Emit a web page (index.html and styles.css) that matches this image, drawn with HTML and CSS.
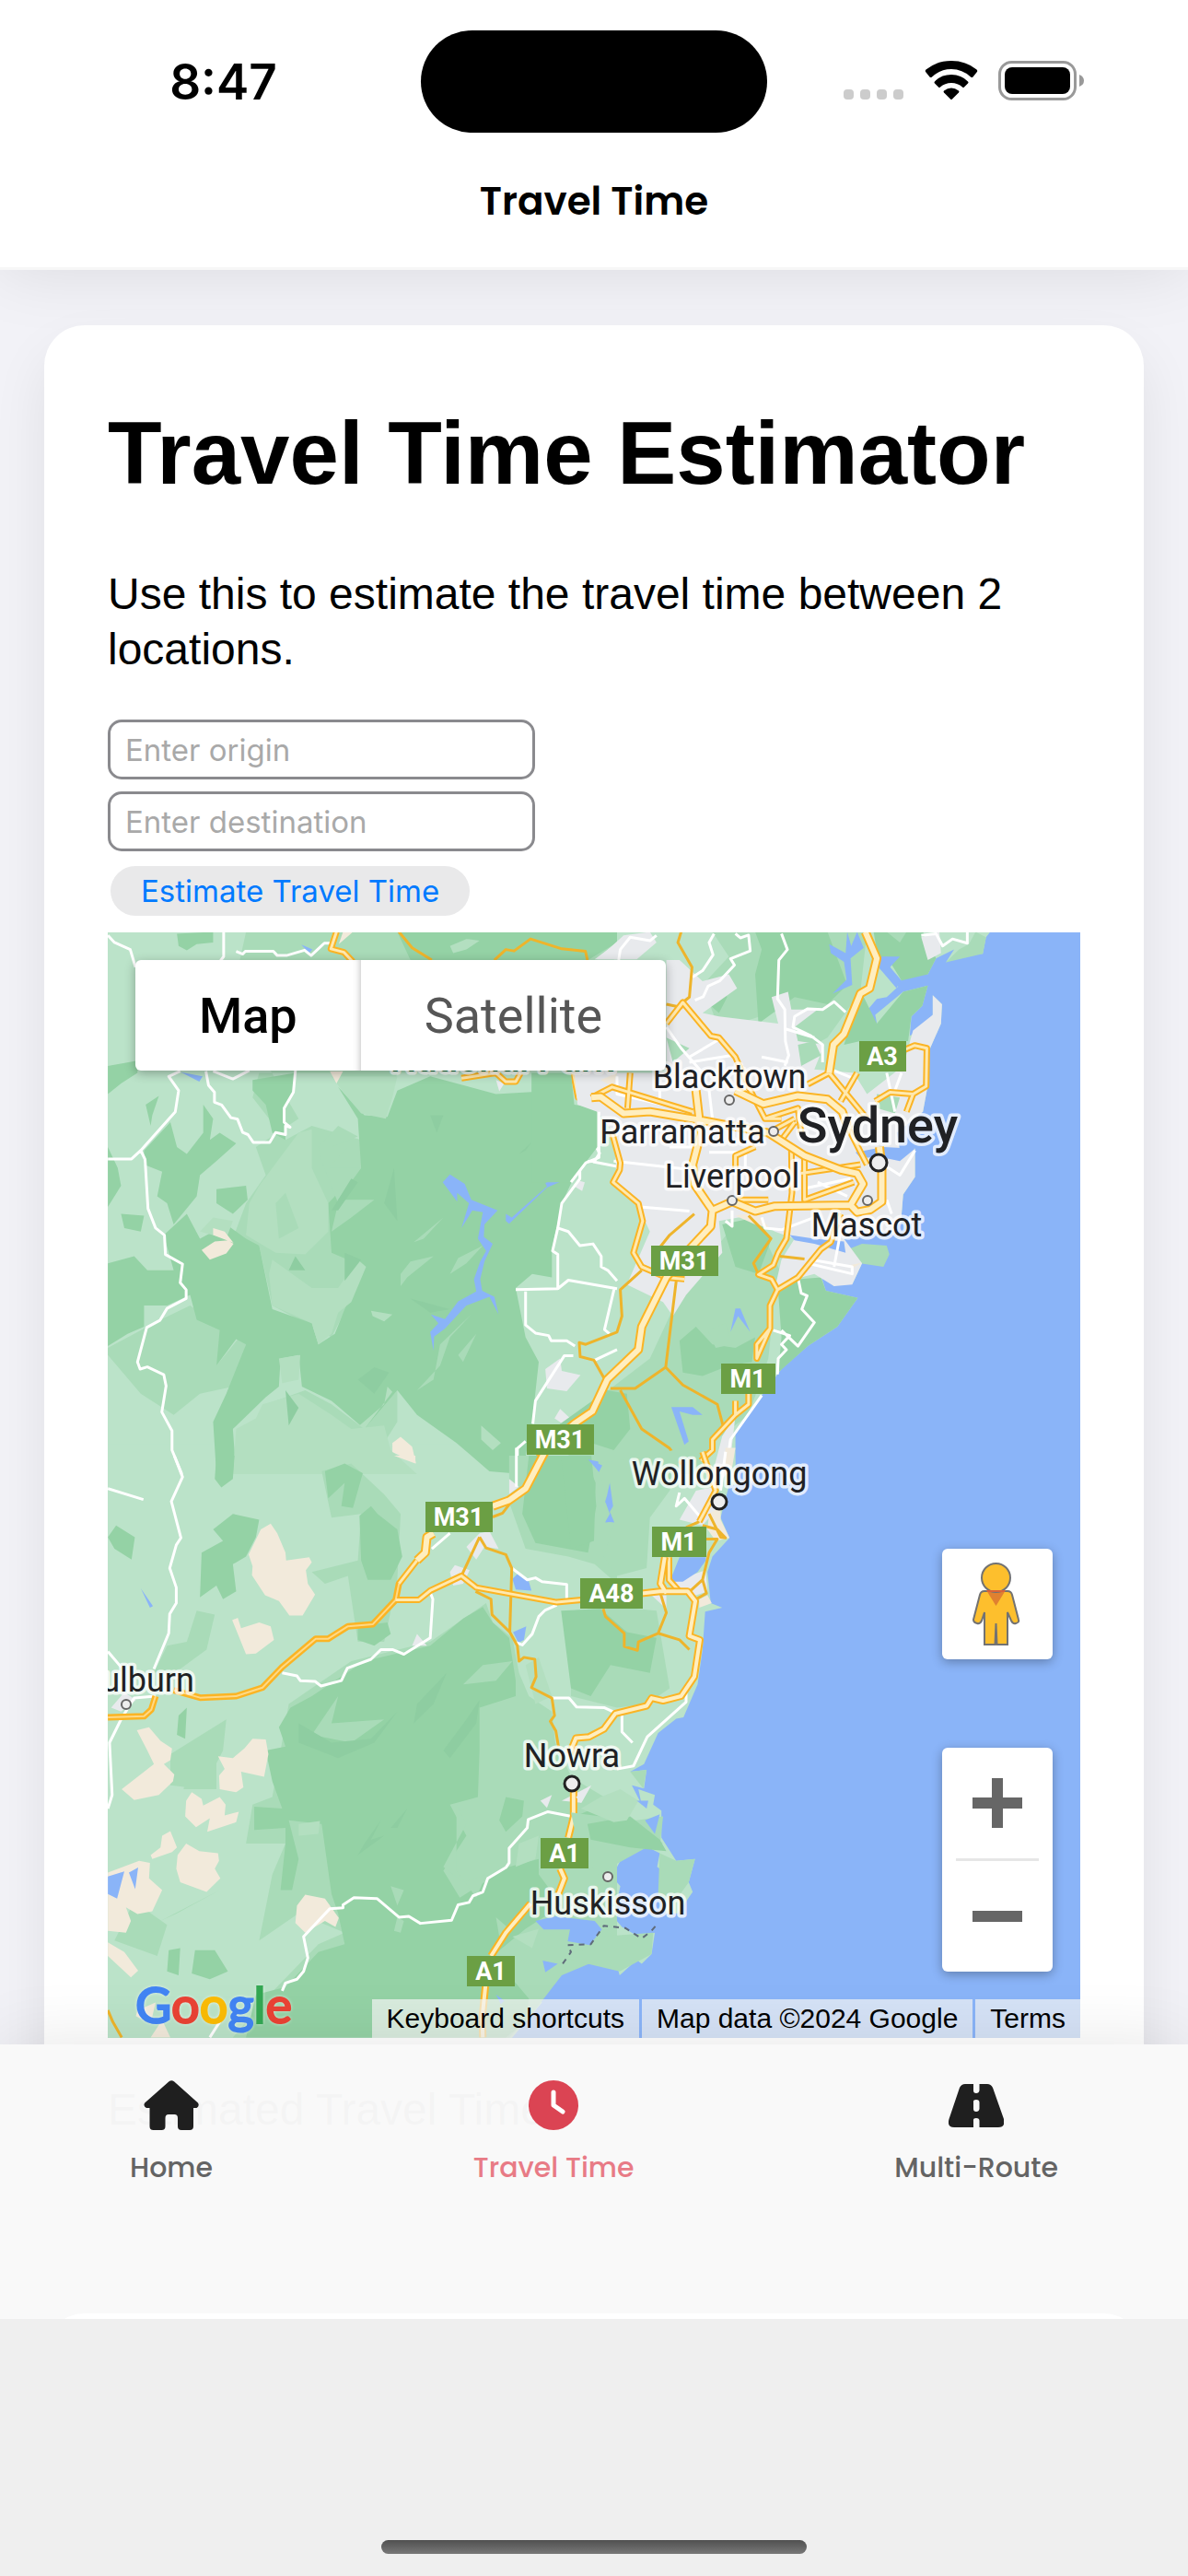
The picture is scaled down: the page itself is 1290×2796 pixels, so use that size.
FILE: index.html
```html
<!DOCTYPE html>
<html lang="en">
<head>
  <meta charset="UTF-8">
  <meta name="viewport" content="width=device-width, initial-scale=1.0">
  <title>Travel Time</title>
  <link rel="stylesheet" href="styles.css">
</head>
<body>
  <header class="header">
    <div class="status">
      <span class="clock">8:47</span>
      <span class="island"></span>
      <span class="status-icons">
        <svg width="66" height="12" viewBox="0 0 66 12" class="signal" aria-hidden="true">
          <rect width="11" height="11" rx="4"/><rect x="18" width="11" height="11" rx="4"/><rect x="36" width="11" height="11" rx="4"/><rect x="54" width="11" height="11" rx="4"/>
        </svg>
        <svg width="58" height="43" viewBox="0 0 58 43" aria-hidden="true">
          <path d="M1.500 12.500Q0 11 1.500 9.500Q13 0 29 0T56.500 9.500Q58 11 56.500 12.500L52.500 17.500Q51.500 18.500 50 17.500Q41 9 29 9T8 17.500Q6.500 18.500 5.500 17.500Z"/>
          <path d="M11 22.500Q18 15 29 15T47 22.500Q48 23.500 47 24.500L43 28.500Q42 29.500 41 28.500Q36 24 29 24T17 28.500Q16 29.500 15 28.500L11 24.500Q10 23.500 11 22.500Z"/>
          <path d="M21 32.500Q29 26.500 37 32.500Q38 33.500 37 34.500L30 41.500Q29 42.500 28 41.500L21 34.500Q20 33.500 21 32.500Z"/>
        </svg>
        <svg width="94" height="43" viewBox="0 0 94 43" aria-hidden="true">
          <rect x="1.500" y="1.500" width="82" height="40" rx="13" fill="none" stroke="#999" stroke-width="3"/>
          <rect x="7" y="7" width="71" height="29" rx="8"/>
          <path d="M88 15Q93 17 93 21.500T88 28Z" fill="#999"/>
        </svg>
      </span>
    </div>
    <div class="title">Travel Time</div>
  </header>

  <main class="main">
    <section class="card">
      <h1>Travel Time Estimator</h1>
      <p class="intro">Use this to estimate the travel time between 2 locations.</p>

      <form class="form">
        <input type="text" id="origin" aria-label="Origin" placeholder="Enter origin">
        <input type="text" id="destination" aria-label="Destination" placeholder="Enter destination">
        <button type="button">Estimate Travel Time</button>
      </form>

      <!-- Map -->
      <div class="map">
        <svg class="map-canvas" viewBox="0 0 1056 1200" preserveAspectRatio="xMidYMid slice" role="img" aria-label="Map of Sydney and surrounds">
          <!-- north land -->
          <g transform="translate(503 -12) scale(.35714 .38265)">
            <path class="land" d="M-1440 0H1300L1262 45 1252 92 1200 92 1140 116 1165 80 1110 105 1085 150 1050 140 1005 168 970 130 975 100 935 100 935 130 995 185 960 215 930 220 885 270 930 290 925 265 1010 200 1085 182 1068 240 1035 270 1030 325 1075 300 1100 265 1100 210 1128 235 1125 290 1085 375 1085 465 1070 540 990 600 1000 650 1046 645 1046 725 1010 775 1003 855 960 880 830 900 820 930 885 970 855 1030 850 1005 800 1035 760 1005 775 1048 872 1068 810 1150 720 1205 640 1270 560 1370 500 1450 500 1600H-1440Z"/>
          </g>
          <!-- south land -->
          <g transform="translate(503 568) scale(.35714 .42092)">
            <path class="land" d="M-1440-30H495L500 20 470 110 455 160 482 212 430 260 415 300 425 380 460 392 408 402 400 500 385 590 342 675 320 678 265 715 222 795 180 815 230 810 222 858 185 850 215 900 205 860 255 875 250 900 275 915 275 985 320 1045 377 1040 358 1100 370 1125 325 1180 290 1180 270 1110 285 1075 262 1060 270 1025 235 1010 195 1018 150 1045 125 1085 150 1110 130 1190 155 1215 205 1240 255 1230 245 1285 215 1310 200 1300 148 1340 132 1290 90 1285 40 1292-20 1320-75 1358-103 1395-88 1410-138 1460-188 1510H-1440Z"/>
          </g>

          <!-- north west -->
          <g transform="translate(-7 -12) scale(.35714 .38265)">
            <path class="mid" d="M440 30H1568V100L1480 180 1300 430 900 430 860 560 780 540 700 430 480 430 460 500 560 620 640 580 790 620 870 840 820 960 700 1180 640 1150 520 1090 480 920 400 900 440 800 500 720 470 640 600 560 500 400 400 200ZM20 1210L180 1130 270 1090 370 1160 350 1260 420 1180 440 1200 400 1320 300 1340 220 1400 120 1340 20 1230ZM530 1360L620 1330 700 1370 800 1440 900 1330 900 1420 800 1568H700L640 1440Z"/>
            <path class="dark" d="M230 35L340 30V60L290 65 260 82 235 70ZM940 110L900 30H1568V60L1480 110ZM20 410L110 395V430L60 460 20 490ZM780 560L720 470 800 550 870 555 900 480 1000 440 1200 490 1380 480 1490 560 1500 640 1450 700 1400 800 1370 930 1370 1010 1310 1000 1260 1040 1290 1180 1330 1250 1310 1420 1280 1568 1180 1560 1080 1480 960 1400 900 1330 800 1440 700 1360 610 1320 600 1230 545 1240 540 1320 500 1350 400 1440 410 1568 350 1568 340 1420 380 1340 440 1200 410 1185 350 1260 360 1160 290 1130 270 1060 200 1090 130 1090 130 1150 80 1170 20 1205V970L100 950 140 990 220 990 190 890 260 830 300 900 380 860 440 900 480 920 520 1100 640 1140 660 1200 710 1170 740 1100 800 980 700 940 690 800 790 700ZM310 520L340 560 330 620 360 600 410 630 350 680 300 720 290 780 220 860 200 800 170 780 185 710 130 690 130 650 210 570 230 640 260 660 310 600ZM460 450L590 430 580 490 555 530 560 620 520 600 500 520 460 480ZM350 760L440 750 445 790 400 830 350 800ZM135 520L175 495 155 550 150 580ZM60 830L130 835 120 880 70 870ZM20 640L50 700 60 750 20 810Z"/>
            <path class="light" d="M700 440H900L885 500 865 560 790 545 740 490ZM480 750L520 700 600 600 640 590 640 700 690 800 690 880 620 945 530 940 440 890 450 800ZM520 960L640 1040 720 1040 780 960 805 980 760 1080 720 1110 700 1170 660 1200 640 1140 520 1090 510 1000ZM300 880L340 840 400 850 380 900ZM540 1240L605 1230 600 1300 550 1310ZM1060 70L1110 50 1150 55 1110 80 1070 90ZM490 1370L600 1340 700 1400 760 1440 860 1430 880 1500 960 1568H400L410 1440 470 1410ZM820 1105L885 1115 860 1135 825 1120ZM1155 1430L1215 1480 1190 1500 1155 1470ZM870 1320L885 1335 800 1440 785 1430 860 1370Z"/>
            <path class="mid" d="M1010 1300L1030 1200 1125 1115 1060 1180 1030 1260 960 1330ZM910 1000L940 965 1010 950 930 1010 910 1035ZM1060 1000L1085 955 1160 920 1110 970ZM950 910L1040 840 980 900ZM1140 1170L1100 1250 1085 1230ZM660 640L720 580 780 610 700 640 750 640 690 700 790 700 720 790 830 790 760 840 700 880 720 800 670 680ZM530 800L560 770 600 870 540 900Z"/>
            <path class="shade" d="M590 950L620 990H570ZM740 940L790 960 740 1020ZM780 1300L830 1265 875 1280 830 1340ZM560 1330L600 1380 570 1430ZM1000 550L1040 550 1020 600ZM1270 660L1310 625 1290 650ZM700 820L760 730 780 740 720 820ZM890 700L860 800 900 850ZM940 1070L1060 1100 1000 1110Z"/>
            <path class="sand" d="M305 932L345 908 385 905 402 915 380 942 330 960ZM340 870L375 880 402 912 340 890ZM885 1480L910 1462 945 1490 957 1538 885 1505ZM695 425L735 425 715 460ZM735 30H765L722 65Z"/>
            <path class="urban" d="M1568 60L1500 108H1568ZM1350 1270L1395 1240 1400 1275 1457 1287 1415 1333 1355 1325ZM1378 1410L1395 1383 1432 1415 1410 1430ZM1435 750L1450 735 1470 740 1462 765ZM1450 425H1568V530L1480 520ZM1200 450L1225 460 1210 482Z"/>
            <path class="water" d="M1038 740L1060 718 1105 745 1125 790 1205 820 1165 860 1163 895 1190 915 1165 965 1152 1015 1158 1048 1195 1065 1208 1115 1180 1065 1110 1090 1045 1155 1012 1178 1010 1218 1000 1165 1025 1140 1002 1115 1045 1128 1085 1078 1140 1050 1133 1015 1152 965 1170 935 1145 900 1160 825 1128 820 1095 870 1118 800 1082 770 1082 795ZM1230 830L1248 840 1355 752 1350 742 1422 713 1410 733 1355 755 1240 858 1230 850ZM242 428L308 440 298 455ZM608 66L642 80 632 90ZM1480 1525L1522 1548 1510 1558Z"/>
            <path class="white" d="M20 40L40 60 88 80 104 130M372 30V100L360 115M410 85l20 8 8-8h85l12 12h28l55-15 20 15 40-35h20M240 425L205 440 235 480 225 540 120 650 92 674H20M120 650L133 675 142 815 165 870 192 890 195 945 247 972 240 1025 258 1045V1070L200 1098 178 1132 138 1152 110 1250 118 1270 140 1264 190 1286 197 1318 184 1392 215 1445V1500L245 1568M318 425l8 40 18 20v28l22 8 28 36 20 4 16 38 16 6 16 22h50l18-28 30 6v-25l14 4-18-14v-40l28-45 10-100M340 425l60 22 50-24M1505 520V640L1515 658 1500 680 1475 682 1455 705V730L1400 800 1388 870 1372 935 1388 945V1042L1260 1045M1290 1050V1145L1320 1168 1360 1175 1368 1190H1415L1440 1205M1388 1042L1420 1018 1568 1042M1388 870L1420 880 1455 920 1495 915 1520 950V980L1540 990 1568 1020M1560 1040L1530 1158 1545 1170M1435 1232H1408L1320 1360 1312 1425M1290 1475L1265 1495V1590M1500 1245L1568 1215M1495 682L1568 695"/>
            <path class="minor" d="M905 30L945 75 1005 110M1195 110L1230 80 1255 84 1305 50 1400 78 1472 85 1478 110"/>
            <path class="road" d="M715 30L698 78 738 88 765 115M1095 445L1200 430 1230 455H1260L1275 430M1435 430L1450 500 1485 515"/>
            <path class="road-fill" d="M715 30L698 78 738 88 765 115M1095 445L1200 430 1230 455H1260L1275 430M1435 430L1450 500 1485 515"/>
          </g>

          <!-- north east -->
          <g transform="translate(503 -12) scale(.35714 .38265)">
            <path class="mid" d="M430 30H900L880 200 780 330 680 380 640 250 540 280 440 280 400 180 480 100ZM330 1060L480 880 560 840 640 1000 620 1060 600 1240 540 1400 430 1480 380 1568H-40L100 1340 240 1240Z"/>
            <path class="dark" d="M560 30H780L840 180 780 235 680 215 570 290 560 150 580 80ZM920 30H1070L1110 105 1085 150 1005 168 960 100 935 110ZM885 205L930 290 1010 200 1085 182 1068 240 1035 270 1025 340H880L830 350 850 290ZM425 200L455 180 475 215 450 260 425 240ZM330 1190L380 1150 430 1200 500 1210 560 1180 550 1250 480 1260 400 1290 340 1280ZM460 860L560 840 610 900 570 1000 500 980ZM630 1050L690 1015 760 1010 775 1048 872 1068 810 1150 720 1205 630 1280 640 1180ZM-40 1430L110 1330 170 1340 180 1440 130 1500 30 1470ZM920 500L990 500 1000 540 940 545ZM-120 430L0 430 10 520 80 530 80 640 0 740H-120Z"/>
            <path class="mid" d="M1140 116L1252 92 1262 45 1230 30 1210 65 1180 80ZM830 935L885 915 960 920 968 945 950 980 880 970ZM415 1160L470 1140 490 1200 440 1210ZM960 30L1020 30 1000 60Z"/>
            <path class="urban" d="M80 108L160 40 240 30 260 60 200 108ZM290 110H330L400 170 480 150 505 190 400 260 450 270 630 290 610 215 660 200 670 250 750 250 680 300 690 340 770 350 740 420 860 430 900 490 1010 410 1040 310 1100 265 1100 210 1128 235 1125 290 1085 375 1085 465 1070 540 990 600 1000 650 1046 645 1046 725 1010 775 1003 855 960 880 830 900 885 970 855 1030 800 1035 740 1000 700 1010 620 1040 640 960 680 900 620 880 540 835 450 850 460 940 350 1060 310 1120 280 1080 170 1030 240 880 210 820 140 740 130 600 80 540 20 520 10 430H290ZM1065 45L1120 30 1125 90 1085 110ZM500 1400L480 1568H430L460 1460Z"/>
            <path class="sand" d="M500 835L560 825 605 870 560 860ZM90 450L140 430 130 470ZM850 975L885 968 855 985Z"/>
            <path class="mid" d="M290 330L360 360 310 400ZM690 350L740 340 760 380 700 410ZM930 490L1000 500 985 545 930 530Z"/>
            <path class="water" d="M785 65L835 90 840 30 852 70 870 30 890 75 850 105 855 180 795 205 838 165 830 115 790 90ZM865 655L950 640 1046 645 1000 680 950 670 880 670ZM665 890L740 900 830 908 835 940 740 915 680 905ZM485 1165L500 1098 515 1098 545 1165 508 1120ZM305 1378L370 1378 400 1400 370 1400 330 1390 358 1475 345 1485ZM945 100L1000 100 970 130 1000 170 990 190 935 130Z"/>
            <path class="white" d="M260 40L240 55 180 45 150 80 145 110M435 35L420 60 432 95 400 140 370 158M500 35l15 12 25-8 5 45-60 22 12 18-45 45-35 15-15 30-25 10M640 35L658 80 632 110 628 220 650 250 652 340 662 380 650 410M835 258L800 228 765 250 720 248 680 270 675 300 730 325 765 350V400M290 300L335 360 400 430M360 385L450 335M360 400L490 380M580 385L660 400M652 305L740 330M140 440V490L280 520M270 480V520M420 480L430 560M300 640L380 640M420 655H530V700M130 680L370 705M210 810L360 822M470 850L490 865V820M580 840L590 870 640 875 740 840M0 740L45 685 85 670V540M690 1010L700 1055 718 1062 702 1100 740 1138 690 1205 640 1160M615 1160L665 1175 640 1200 655 1215 630 1240 628 1285M580 1345L485 1470 470 1568M720 970L855 1000V980L730 960M800 980L820 880M950 690L1000 720 1046 650M960 790L975 830M960 430L985 540M1005 430L985 480M1065 40L1110 35 1130 70 1160 50 1205 62V30M750 740L840 780M700 760L850 730M790 420L870 450"/>
            <path class="minor" d="M335 30L325 60 368 130 360 215 340 230M375 830L300 890 270 925M540 835L608 900 555 970 570 1002M635 950L710 958M320 1020L288 1265 195 1325 120 1325M288 1265L340 1315 445 1370 465 1440M150 1330L215 1440 300 1495 335 1540M215 990L150 1045 155 1120 140 1165 45 1200 25 1195 28 1235 70 1245 100 1295M290 235L340 245"/>
            <path class="road" d="M290 290L340 230 425 325 450 330 500 385 540 470 590 560H640M785 430L720 462M785 430L900 560M870 430L820 510M62 500L125 470 230 500 370 540M180 430L172 530M125 600L150 685 148 705 128 740 205 800 218 850 190 940 215 980 290 1010 345 1015M925 510L970 485 1040 490 1080 468 1082 360 1045 352 1000 370M1040 490L1020 540M590 560L690 530 700 600M640 620L680 570M670 640L672 770 655 900 630 940 615 975 570 1002 610 1015 628 1045 605 1090V1155L565 1240V1200L605 1155M628 1045L690 1010 760 930 790 910 820 830M710 660V790L860 740M500 700V665L560 640M500 790H600M700 715L880 690M600 600L680 560M845 590L900 690M540 1340V1370L500 1400V1360M500 1400L430 1470V1500L395 1530"/>
            <path class="road-fill" d="M290 290L340 230 425 325 450 330 500 385 540 470 590 560H640M785 430L720 462M785 430L900 560M870 430L820 510M62 500L125 470 230 500 370 540M180 430L172 530M125 600L150 685 148 705 128 740 205 800 218 850 190 940 215 980 290 1010 345 1015M925 510L970 485 1040 490 1080 468 1082 360 1045 352 1000 370M1040 490L1020 540M590 560L690 530 700 600M640 620L680 570M670 640L672 770 655 900 630 940 615 975 570 1002 610 1015 628 1045 605 1090V1155L565 1240V1200L605 1155M628 1045L690 1010 760 930 790 910 820 830M710 660V790L860 740M500 700V665L560 640M500 790H600M700 715L880 690M600 600L680 560M845 590L900 690M540 1340V1370L500 1400V1360M500 1400L430 1470V1500L395 1530"/>
            <path class="highway" d="M62 500L90 498 160 545 240 540 400 565 600 600 710 665 820 705 870 715 888 745 850 805 870 825 910 818 945 795V700L938 640M-145 1590L-70 1490 10 1425 65 1390 110 1300 205 1215 215 1150 290 1010 360 930 425 865 430 820 375 745 370 690 395 600 380 480M430 820L490 795 560 822 620 808 850 805M500 480L585 518 690 495 780 505 825 540 845 590M895 30L930 105 908 190 880 205 830 320 798 350 785 430"/>
            <path class="highway-fill" d="M62 500L90 498 160 545 240 540 400 565 600 600 710 665 820 705 870 715 888 745 850 805 870 825 910 818 945 795V700L938 640M-145 1590L-70 1490 10 1425 65 1390 110 1300 205 1215 215 1150 290 1010 360 930 425 865 430 820 375 745 370 690 395 600 380 480M430 820L490 795 560 822 620 808 850 805M500 480L585 518 690 495 780 505 825 540 845 590M895 30L930 105 908 190 880 205 830 320 798 350 785 430"/>
          </g>

          <!-- south west -->
          <g transform="translate(-7 568) scale(.35714 .42092)">
            <path class="mid" d="M670 40L760 20 860 100 910 150 900 320 860 480 780 480 750 310 680 330 640 300 780 270 790 150 700 160ZM1240 0H1568V330L1500 280 1420 260 1290 240 1240 120ZM570 640L760 530 1000 480 1170 380 1190 430 1250 470 1270 560 1300 620 1370 660 1380 740 1430 830 1568 900V1280L1400 1340 1300 1450 1240 1500H400L500 1400 660 1260 740 1230 600 1180 480 1250 520 1080 560 1000 440 1000 460 900 520 880ZM210 770L380 680 370 760 310 860 210 850ZM270 800L350 780 350 860 250 860ZM160 560L200 490 260 480 290 400 345 410 320 500 240 550ZM180 1200L360 1120 230 1180ZM100 1150L200 1210 170 1290 40 1250Z"/>
            <path class="dark" d="M340 190L400 150 480 165 470 210 440 260 400 280 410 350 370 370 350 335 300 365 305 250 370 220ZM20 210L45 180 102 210 92 268 40 240ZM350 0H405L400 60 365 82 345 60ZM680 40L740 20 795 45 765 135 730 130 740 70 690 110ZM785 155L820 130 840 150 900 190 915 260 880 320 810 320 790 270ZM780 440L870 430 880 460 830 490 780 475ZM1300 0H1490L1505 130 1480 250 1320 225 1280 150ZM575 650L640 620 800 530 1000 490 1100 420 1160 390 1190 430 1240 470 1260 580 1260 620 1150 650 1150 760 1145 880 1060 900 1110 980 1040 1070 1090 1140 1240 1060 1330 1040 1330 1080 1400 1160 1290 1220 1190 1290 1300 1400 1290 1460 1230 1500H440L470 1390 560 1370 660 1280 740 1260 720 1180 700 1130 670 950 570 940 600 1040 580 1120 545 1120 560 1000 560 960 465 965V905L550 910 520 840 500 760 560 750 540 700ZM1210 940L1230 880 1285 890 1280 930 1230 970ZM235 670L260 650 255 730 230 720ZM285 1275L345 1275 385 1330 330 1350 275 1335ZM205 1275L240 1270 235 1340 200 1330ZM1440 930L1510 905 1568 930V990L1470 990Z"/>
            <path class="mid" d="M640 720L720 620 700 690 860 680 760 740ZM1080 900L1110 950 1040 1060 1100 1100 1170 1080 1140 1140 1080 1070ZM880 1110L920 1120 900 1160ZM900 1190L920 1200 910 1230 890 1225ZM1200 1190L1240 1220 1210 1240ZM1100 590L1160 540 1250 530 1200 580Z"/>
            <path class="light" d="M600 950L665 942 660 975 600 980ZM1290 540L1330 520 1370 620 1320 640ZM1270 1000L1330 980 1320 1040 1260 1060ZM1250 1240L1330 1220 1310 1270Z"/>
            <path class="shade" d="M600 690L700 740 820 730 900 660 830 740 720 780 600 740ZM960 640L1050 560 1010 640 950 690ZM1110 680L1150 630 1140 690 1060 780 1040 760ZM800 1000L850 940 820 990 860 980 780 1030ZM880 960L930 910 900 960Z"/>
            <path class="sand" d="M485 190L515 175 535 200 560 250 562 270 632 262 640 275 622 295 628 330 650 358 612 412H572L540 375 498 360 458 308 460 285 448 255ZM398 424L415 418 425 445 480 430 515 440 525 475 470 510 440 512ZM108 708L145 700 180 735 215 755 210 785 190 795 222 822 218 840 175 875 100 888 62 860 160 795 140 760ZM355 775L400 780 435 755 460 730 500 732 508 770 495 828 425 815 432 855 410 868 360 860 358 825 375 808ZM258 890L275 868 305 885 310 902 360 880 378 900 375 928 418 918 410 945 322 970 330 935 288 958 255 930ZM232 1030L258 1000 298 1020 355 1025 358 1045 345 1065 362 1090 320 1125 240 1100 228 1065ZM150 1030L180 1010 185 980 210 968 230 1010 215 1022 155 1040ZM20 1075L115 1045 148 1050 145 1090 185 1120 155 1175 110 1182 75 1165 90 1200 75 1230 20 1225ZM20 1255L70 1280 112 1328 90 1345 20 1290ZM595 1160L620 1132 680 1142 722 1192 712 1215 680 1200 620 1230 590 1205ZM890 0H955V20ZM110 1430L165 1410 150 1465 105 1445ZM150 1500L185 1455 210 1500Z"/>
            <path class="urban" d="M1110 235L1150 200 1180 195 1208 240 1165 235 1140 268ZM1060 300L1075 282 1120 295 1100 330 1070 335ZM945 490L960 460 990 490ZM1240 60L1270 80 1240 100ZM1400 890L1490 850 1460 895ZM1335 890L1370 875 1355 908ZM30 650L70 610 105 630 60 660Z"/>
            <path class="water" d="M1250 318L1265 305 1300 325 1308 348 1260 345ZM1252 455L1292 440 1285 475 1268 482ZM20 1085L70 1072 48 1142 20 1130ZM84 1075L112 1062 103 1118ZM120 342L157 388 148 392ZM1480 10L1510 15 1530 55ZM1545 70L1555 130 1532 120ZM1532 172L1555 140 1560 170ZM1320 1200L1380 1188 1500 1200 1522 1222 1485 1262 1418 1252 1425 1222 1345 1222ZM1342 1302L1388 1310 1350 1332ZM1200 1390L1225 1405 1215 1415Z"/>
            <path class="white" d="M20 85l108 28M222 0L247 55 213 118 242 212 228 230 208 290 228 340V380L208 408 205 458 160 550M20 505L60 545M165 620L100 625 60 680 25 740 33 875 20 910M550 560L595 568 605 580 650 582 668 594 730 580 748 548 820 525 850 500H885L920 512 1000 470 1008 370 1000 352M1005 240L1060 200M1262-20V80M1248 290L1295 320 1320 315 1340 325 1415 332V375M1385 385L1350 398 1330 415 1310 460 1280 488 1262 482M1370 625H1422L1445 648 1530 650 1568 665M1430 930L1358 918 1298 938 1295 960 1240 1012V1050L1230 1062 1175 1090 1160 1125 1130 1135 1118 1152 1085 1158 1065 1198 970 1206 935 1188 905 1190 838 1142 768 1140 735 1158V1166L695 1168 615 1240 628 1295 615 1330 595 1350 560 1360 550 1380M375 1440L330 1500"/>
            <path class="minor" d="M1150 210L1095 310M1150 210L1170 238 1230 255 1248 290 1242 455 1265 490 1270 530 1285 520 1318 525 1322 570 1308 598 1370 625 1378 670 1365 685 1382 710 1390 750M1138 350L1185 370 1188 410 1242 455M20 1430L35 1460 62 1500M1190 158L1220 148 1250 115"/>
            <path class="road" d="M960 270L905 330 895 372 825 435 750 440 690 472H652L550 545 490 598 410 620 300 624 220 605M165 620L152 655 130 672 20 675M895 372H965L1000 348 1095 310 1140 340 1385 378 1460 372"/>
            <path class="road-fill orange" d="M905 330L895 372 825 435 750 440 690 472H652L550 545 490 598 410 620 300 624 220 605M165 620L152 655 130 672 20 675"/>
            <path class="road-fill" d="M960 270L905 330M895 372H965L1000 348 1095 310 1140 340 1385 378 1460 372"/>
            <path class="highway" d="M1355-20L1290 85 1240 115 1190 130M1010 200L990 210 985 250 960 270"/>
            <path class="highway-fill" d="M1355-20L1290 85 1240 115 1190 130M1010 200L990 210 985 250 960 270"/>
            <path class="trunk" d="M1436 850V930L1420 985M1395 1065L1408 1090 1390 1130M1305 1155L1230 1230 1185 1290M1168 1368L1158 1450 1160 1500"/>
            <path class="trunk-fill" d="M1436 850V930L1420 985M1395 1065L1408 1090 1390 1130M1305 1155L1230 1230 1185 1290M1168 1368L1158 1450 1160 1500"/>
          </g>

          <!-- south east -->
          <g transform="translate(503 568) scale(.35714 .42092)">
            <path class="mid" d="M140 390L260 400 300 600 230 640 140 650 0 620V400ZM240 0L340-20 300 90 240 160 230 290 140 310 100 260 130 180 80 20ZM230 1010L80 1080 20 1000 0 920 90 930 200 940 280 1000ZM270 1025L320 1045 377 1040 358 1100 290 1180 265 1130ZM90 1240L250 1230 245 1285 148 1330 0 1300ZM200 940L280 930 270 1010ZM180 815L230 810 220 858Z"/>
            <path class="dark" d="M-30 400L90 395 170 455 260 470 240 560 120 540 60 620 0 600ZM-30 0H40L75 70 70 220 0 240ZM50 950L180 930 270 990 290 1020 180 1010 60 990Z"/>
            <path class="light" d="M30 910L90 880 150 860 205 890 170 940 130 945Z"/>
            <path class="urban" d="M380 90L440 80 440 140 400 180 330 165ZM310 325L410 295 415 350 380 360 330 350ZM245 360L290 360 290 395ZM15 880L60 852 30 895Z"/>
            <path class="sand" d="M420 150L455 130 455 165 482 212 440 220 415 190ZM470-20H500L490 30 460 60ZM390 370L415 360 428 380 390 392Z"/>
            <path class="water" d="M300 325L330 262H410V270L385 300 340 325ZM55 10L95 25 85 42ZM105 120L118 70 128 130 118 145 132 172 105 170 118 150ZM200 890L235 890 230 910ZM225 940L270 925 255 975Z"/>
            <path class="dash" d="M-25 1310L0 1280-10 1262 60 1260 100 1212 165 1218 215 1245 245 1225 265 1205"/>
            <path class="white" d="M155 670V712L187 740M350 600V635L232 725 190 800 140 808M330 95L320 130 345 110 390 155M470-10L455 90"/>
            <path class="minor" d="M98 395L105 415 162 458V492L202 502 205 480 265 458 330 475 360 500M272 355L290 405 265 458M420 150L455 210 470 212 445 190 400 180M410 215L445 215 420 250 400 320 355 355M400 320L412 355 380 370M390 170L350 185"/>
            <path class="road" d="M400-10L440 90 390 170M298 262V320L330 350"/>
            <path class="road-fill" d="M400-10L440 90 390 170M298 262V320L330 350"/>
            <path class="trunk" d="M285 262L272 330 290 355M215 355L270 350H355L378 375 360 465 392 475 375 570 335 620 280 632 245 625 230 645 135 665 100 705 55 725 15 728-5 770"/>
            <path class="trunk-fill" d="M285 262L272 330 290 355M215 355L270 350H355L378 375 360 465 392 475 375 570 335 620 280 632 245 625 230 645 135 665 100 705 55 725 15 728-5 770"/>
          </g>

          <!-- route shields -->
          <g class="shields">
            <rect x="816" y="118" width="51" height="33"/><text x="841" y="144">A3</text>
            <rect x="590" y="340" width="73" height="33"/><text x="626" y="366">M31</text>
            <rect x="666" y="468" width="59" height="33"/><text x="695" y="494">M1</text>
            <rect x="455" y="534" width="73" height="33"/><text x="491" y="560">M31</text>
            <rect x="345" y="618" width="73" height="33"/><text x="381" y="644">M31</text>
            <rect x="591" y="645" width="59" height="33"/><text x="620" y="671">M1</text>
            <rect x="513" y="701" width="68" height="33"/><text x="547" y="727">A48</text>
            <rect x="470" y="983" width="52" height="33"/><text x="496" y="1009">A1</text>
            <rect x="390" y="1111" width="52" height="33"/><text x="416" y="1137">A1</text>
          </g>

          <!-- places -->
          <g class="towns">
            <circle cx="675" cy="182" r="5"/><circle cx="723" cy="216" r="5"/><circle cx="678" cy="291" r="5"/><circle cx="825" cy="291" r="5"/><circle cx="20" cy="838" r="5"/><circle cx="543" cy="1025" r="5"/>
          </g>
          <g class="cities">
            <circle cx="837" cy="250" r="9"/><circle cx="664" cy="618" r="8"/><circle cx="504" cy="924" r="8"/>
          </g>
          <g class="places">
            <text class="park" x="428" y="151">National Park</text>
            <text x="675" y="169">Blacktown</text>
            <text x="624" y="229">Parramatta</text>
            <text class="capital" x="836" y="228">Sydney</text>
            <text x="678" y="277">Liverpool</text>
            <text x="824" y="330">Mascot</text>
            <text x="664" y="600">Wollongong</text>
            <text x="21" y="824">Goulburn</text>
            <text x="504" y="906">Nowra</text>
            <text x="543" y="1066">Huskisson</text>
          </g>
        </svg>

        <div class="map-type">
          <button type="button" class="active">Map</button>
          <button type="button">Satellite</button>
        </div>

        <div class="map-controls">
          <button type="button" class="pegman" aria-label="Street View">
            <svg width="120" height="120" viewBox="0 0 120 120" aria-hidden="true">
              <path class="peg" d="M46 46Q42 46 41 50L34 77Q34 80 38 81Q41 82 43 78L46 69V104H57.500L58.500 81 59.500 104H71V69L75 78Q77 82 80 81Q84 80 83 77L76 50Q75 46 71 46Z"/>
              <path d="M48 45H69L58.500 62Z" fill="#e08030"/>
              <circle class="peg" cx="58.500" cy="31.500" r="15.500"/>
              <path d="M49 46H68" stroke="#d9623a" stroke-width="2"/>
            </svg>
          </button>
          <div class="zoom">
            <button type="button" aria-label="Zoom in"><svg width="54" height="54" viewBox="0 0 54 54" aria-hidden="true"><path d="M21 0H33V21H54V33H33V54H21V33H0V21H21Z"/></svg></button>
            <button type="button" aria-label="Zoom out"><svg width="54" height="54" viewBox="0 0 54 54" aria-hidden="true"><path d="M0 21H54V33H0Z"/></svg></button>
          </div>
        </div>

        <a class="google" href="#" aria-label="Google"><span class="blue">G</span><span class="red">o</span><span class="yellow">o</span><span class="blue">g</span><span class="green">l</span><span class="red">e</span></a>

        <div class="map-footer">
          <button type="button">Keyboard shortcuts</button>
          <span>Map data ©2024 Google</span>
          <a href="#">Terms</a>
        </div>
      </div>

      <p class="result">Estimated Travel Time:</p>
    </section>

    <section class="card next"></section>

    <nav class="tabs">
      <a href="#">
        <svg width="60" height="54" viewBox="0 0 60 54" aria-hidden="true"><path d="M27.500 1.200Q30.300-.800 33 1.200L59 24.500Q61 28 57.500 30H54V50Q54 54 50 54H41Q37 54 37 50V41Q37 37 33.500 37H27Q23.500 37 23.500 41V50Q23.500 54 19.500 54H10.500Q6.500 54 6.500 50V30H3Q-1 28 1.200 24.500Z"/></svg>
        <span>Home</span>
      </a>
      <a href="#" class="current">
        <svg width="54" height="54" viewBox="0 0 54 54" aria-hidden="true"><circle cx="27" cy="27" r="27"/><path d="M27 13V27L37 34" fill="none" stroke="#fff" stroke-width="5" stroke-linecap="round" stroke-linejoin="round"/></svg>
        <span>Travel Time</span>
      </a>
      <a href="#">
        <svg width="60" height="54" viewBox="0 0 60 54" aria-hidden="true"><path d="M18 4H27V11Q27 14 30 14T33.500 11V4H42Q46 4 48 8L60 42Q62 51 54 51H33.500V44Q33.500 41 30 41T27 44V51H6Q-2 51 .500 42L12 8Q14 4 18 4ZM27 24V31Q27 34 30 34T33.500 31V24Q33.500 21 30 21T27 24Z" fill-rule="evenodd"/></svg>
        <span>Multi-Route</span>
      </a>
    </nav>
  </main>

  <footer class="home-area"><span class="home-bar"></span></footer>
</body>
</html>
```
FILE: styles.css
```css
* {
  box-sizing: border-box;
}
body {
  margin: 0;
  height: 100vh;
  display: flex;
  flex-direction: column;
  background: #f2f2f7;
  color: #000;
  font-family: Helvetica, "Liberation Sans", Arial, sans-serif;
}
button {
  border: none;
  background: none;
  padding: 0;
  cursor: pointer;
}
a {
  color: inherit;
  text-decoration: none;
}

/* Header */
.header {
  position: relative;
  z-index: 3;
  background: #fff;
  border-bottom: 3px solid #f7f7f7;
  box-shadow: 0 0 70px rgba(0, 0, 0, 0.1);
  text-align: center;
}
.status {
  display: grid;
  grid-template-columns: 1fr 376px 1fr;
  height: 177px;
  align-items: center;
}
.clock {
  font: 600 53px/60px Inter, sans-serif;
  padding-left: 28px;
}
.island {
  height: 111px;
  border-radius: 56px;
  background: #000;
}
.status-icons {
  display: flex;
  justify-content: center;
  align-items: flex-end;
  gap: 22px;
  padding-right: 30px;
  padding-bottom: 3px;
}
.signal {
  fill: #ccc;
}
.title {
  font: 600 42px/60px Poppins, Inter, sans-serif;
  padding: 12px 0 41px;
}

/* Content */
.main {
  position: relative;
  flex: 1;
  min-height: 0;
  overflow: hidden;
  padding: 60px 48px 0;
}
.card {
  background: #fff;
  border-radius: 44px;
  padding: 69px;
  box-shadow: 0 30px 60px rgba(0, 0, 0, 0.08);
}
h1 {
  margin: 14px 0 67px;
  font-size: 96px;
  line-height: 112px;
}
.intro {
  margin: 0 0 46px;
  font-size: 48px;
  line-height: 60px;
}
.form {
  display: flex;
  flex-direction: column;
  align-items: flex-start;
  gap: 13px;
  margin-bottom: 15px;
  font-family: Inter, sans-serif;
}
.form input {
  width: 464px;
  height: 65px;
  padding: 0 16px;
  border: 3px solid #8a8a8e;
  border-radius: 15px;
  background: #fff;
  font: 33px Inter, sans-serif;
}
.form input::placeholder {
  color: #a9a9a9;
}
.form button {
  margin: 3px;
  height: 54px;
  padding: 0 33px;
  border-radius: 27px;
  background: #e9e9ea;
  color: #007aff;
  font: 33px Inter, sans-serif;
}

/* Map */
.map {
  position: relative;
  height: 1200px;
  overflow: hidden;
  background: #8ab4f8;
  font-family: Roboto, sans-serif;
}
.map-canvas {
  display: block;
  width: 100%;
  height: 100%;
}
.land { fill: #bbe3c9; }
.light { fill: #b3dfc0; }
.mid { fill: #a9dbb8; }
.dark { fill: #94d2a5; }
.shade { fill: #8ecda1; }
.sand { fill: #f2eadb; }
.urban { fill: #e8eaed; }
.water { fill: #8ab4f8; }
.white, .minor, .road, .road-fill, .trunk, .trunk-fill, .highway, .highway-fill, .dash {
  fill: none;
  stroke-linejoin: round;
  vector-effect: non-scaling-stroke;
}
.white { stroke: #fff; stroke-width: 3px; }
.minor { stroke: #eeb42b; stroke-width: 3px; }
.road { stroke: #fbb424; stroke-width: 7px; }
.road-fill { stroke: #ffe9af; stroke-width: 3px; }
.road-fill.orange { stroke: #ffd985; stroke-width: 2px; }
.trunk { stroke: #fbb424; stroke-width: 8px; }
.trunk-fill { stroke: #ffeebf; stroke-width: 4px; }
.highway { stroke: #fbb424; stroke-width: 10px; }
.highway-fill { stroke: #ffeebf; stroke-width: 6px; }
.dash { stroke: #5f6b7a; stroke-width: 2px; stroke-dasharray: 6 6; }
.shields rect { fill: #6b9f44; }
.shields text {
  fill: #fff;
  font-size: 27px;
  font-weight: 700;
  text-anchor: middle;
}
.towns circle { fill: #eee; stroke: #666; stroke-width: 2px; }
.cities circle { fill: #eee; stroke: #222; stroke-width: 3px; }
.places text {
  font-size: 36px;
  fill: #202124;
  text-anchor: middle;
  paint-order: stroke;
  stroke: rgba(255, 255, 255, 0.75);
  stroke-width: 7px;
  stroke-linejoin: round;
}
.places .capital {
  font-size: 54px;
  font-weight: 500;
}
.places .park {
  font-size: 40px;
  font-weight: 500;
  fill: #0d652d;
}
.map-type {
  position: absolute;
  top: 30px;
  left: 30px;
  display: flex;
  border-radius: 6px;
  background: #fff;
  box-shadow: 0 3px 12px rgba(0, 0, 0, 0.3);
}
.map-type button {
  height: 120px;
  padding: 0 69px;
  font: 54px Roboto, sans-serif;
  color: #565656;
}
.map-type .active {
  color: #000;
  font-weight: 500;
  box-shadow: inset -8px 0 8px -8px rgba(0, 0, 0, 0.3);
}
.map-controls {
  position: absolute;
  right: 30px;
  bottom: 72px;
  display: grid;
  gap: 96px;
}
.pegman, .zoom {
  width: 120px;
  border-radius: 6px;
  background: #fff;
  box-shadow: 0 3px 12px rgba(0, 0, 0, 0.3);
}
.pegman {
  height: 120px;
}
.pegman svg {
  display: block;
}
.peg {
  fill: #fdbf2d;
  stroke: #727272;
  stroke-width: 2px;
}
.zoom {
  padding: 0 15px;
}
.zoom button {
  display: flex;
  align-items: center;
  justify-content: center;
  width: 100%;
  height: 120px;
  fill: #666;
}
.zoom button + button {
  height: 123px;
  border-top: 3px solid #e6e6e6;
}
.google {
  position: absolute;
  left: 30px;
  bottom: 4px;
  font: 500 54px/64px Lato, sans-serif;
  -webkit-text-stroke: 2px currentColor;
  text-shadow: 0 0 4px #fff;
}
.blue { color: #4285f4; }
.red { color: #ea4335; }
.yellow { color: #fbbc05; }
.green { color: #34a853; }
.map-footer {
  position: absolute;
  right: 0;
  bottom: 0;
  display: flex;
  gap: 3px;
  font: 30px/42px Helvetica, "Liberation Sans", Arial, sans-serif;
}
.map-footer > * {
  padding: 0 16px;
  background: rgba(245, 245, 245, 0.7);
  color: #000;
  font: inherit;
}
.result {
  margin: 48px 0 70px;
  font-size: 48px;
  line-height: 60px;
}
.next {
  position: relative;
  z-index: 2;
  margin-top: 52px;
  min-height: 200px;
  box-shadow: none;
}

/* Tab bar */
.tabs {
  position: absolute;
  left: 0;
  right: 0;
  bottom: 0;
  z-index: 1;
  height: 298px;
  padding: 39px 141px 0;
  display: flex;
  justify-content: space-between;
  align-items: flex-start;
  background: rgba(249, 249, 249, 0.98);
  box-shadow: 0 0 70px rgba(0, 0, 0, 0.1);
}
.tabs a {
  display: flex;
  flex-direction: column;
  align-items: center;
  gap: 21px;
  color: #646464;
  fill: #1f1f1f;
  font: 500 30px/40px Poppins, Inter, sans-serif;
}
.tabs .current {
  color: #e87b86;
  fill: #db4453;
}
.home-area {
  position: relative;
  z-index: 3;
  height: 279px;
  display: flex;
  align-items: flex-end;
  justify-content: center;
  padding-bottom: 24px;
  background: #efefef;
}
.home-bar {
  width: 462px;
  height: 15px;
  border-radius: 8px;
  background: linear-gradient(#505050, #787878);
}
```
